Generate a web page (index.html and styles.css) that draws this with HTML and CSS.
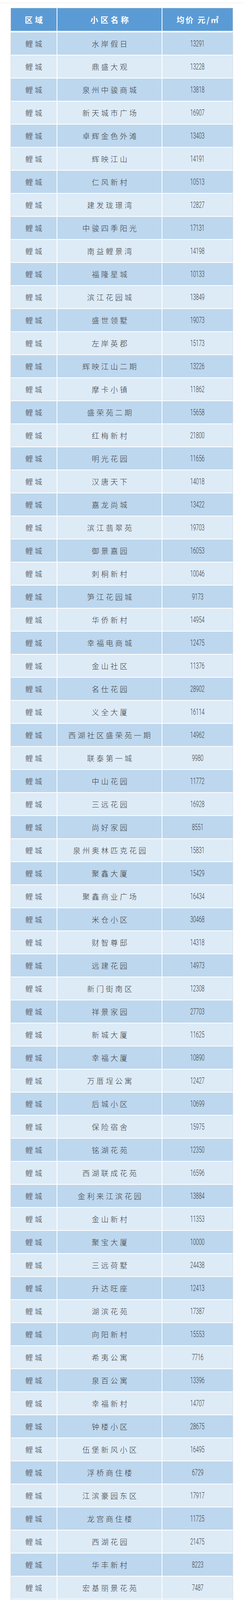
FILE: index.html
```html
<!DOCTYPE html>
<html lang="zh">
<head>
<meta charset="utf-8">
<title>鲤城小区均价</title>
<link rel="stylesheet" href="styles.css">
</head>
<body>
<div class="topline"></div>
<div class="tbl">
  <div class="tr hdr"><div class="c1">区域</div><div class="c2">小区名称</div><div class="c3">均价 元/㎡</div></div>
  <div class="tr"><div class="c1">鲤城</div><div class="c2">水岸假日</div><div class="c3"><span class="n">13291</span></div></div>
  <div class="tr"><div class="c1">鲤城</div><div class="c2">鼎盛大观</div><div class="c3"><span class="n">13228</span></div></div>
  <div class="tr"><div class="c1">鲤城</div><div class="c2">泉州中骏商城</div><div class="c3"><span class="n">13818</span></div></div>
  <div class="tr"><div class="c1">鲤城</div><div class="c2">新天城市广场</div><div class="c3"><span class="n">16907</span></div></div>
  <div class="tr"><div class="c1">鲤城</div><div class="c2">卓辉金色外滩</div><div class="c3"><span class="n">13403</span></div></div>
  <div class="tr"><div class="c1">鲤城</div><div class="c2">辉映江山</div><div class="c3"><span class="n">14191</span></div></div>
  <div class="tr"><div class="c1">鲤城</div><div class="c2">仁风新村</div><div class="c3"><span class="n">10513</span></div></div>
  <div class="tr"><div class="c1">鲤城</div><div class="c2">建发珑璟湾</div><div class="c3"><span class="n">12827</span></div></div>
  <div class="tr"><div class="c1">鲤城</div><div class="c2">中骏四季阳光</div><div class="c3"><span class="n">17131</span></div></div>
  <div class="tr"><div class="c1">鲤城</div><div class="c2">南益鲤景湾</div><div class="c3"><span class="n">14198</span></div></div>
  <div class="tr"><div class="c1">鲤城</div><div class="c2">福隆星城</div><div class="c3"><span class="n">10133</span></div></div>
  <div class="tr"><div class="c1">鲤城</div><div class="c2">滨江花园城</div><div class="c3"><span class="n">13849</span></div></div>
  <div class="tr"><div class="c1">鲤城</div><div class="c2">盛世领墅</div><div class="c3"><span class="n">19073</span></div></div>
  <div class="tr"><div class="c1">鲤城</div><div class="c2">左岸英郡</div><div class="c3"><span class="n">15173</span></div></div>
  <div class="tr"><div class="c1">鲤城</div><div class="c2">辉映江山二期</div><div class="c3"><span class="n">13226</span></div></div>
  <div class="tr"><div class="c1">鲤城</div><div class="c2">摩卡小镇</div><div class="c3"><span class="n">11862</span></div></div>
  <div class="tr"><div class="c1">鲤城</div><div class="c2">盛荣苑二期</div><div class="c3"><span class="n">15658</span></div></div>
  <div class="tr"><div class="c1">鲤城</div><div class="c2">红梅新村</div><div class="c3"><span class="n">21800</span></div></div>
  <div class="tr"><div class="c1">鲤城</div><div class="c2">明光花园</div><div class="c3"><span class="n">11656</span></div></div>
  <div class="tr"><div class="c1">鲤城</div><div class="c2">汉唐天下</div><div class="c3"><span class="n">14018</span></div></div>
  <div class="tr"><div class="c1">鲤城</div><div class="c2">嘉龙尚城</div><div class="c3"><span class="n">13422</span></div></div>
  <div class="tr"><div class="c1">鲤城</div><div class="c2">滨江翡翠苑</div><div class="c3"><span class="n">19703</span></div></div>
  <div class="tr"><div class="c1">鲤城</div><div class="c2">御景嘉园</div><div class="c3"><span class="n">16053</span></div></div>
  <div class="tr"><div class="c1">鲤城</div><div class="c2">刺桐新村</div><div class="c3"><span class="n">10046</span></div></div>
  <div class="tr"><div class="c1">鲤城</div><div class="c2">笋江花园城</div><div class="c3"><span class="n">9173</span></div></div>
  <div class="tr"><div class="c1">鲤城</div><div class="c2">华侨新村</div><div class="c3"><span class="n">14954</span></div></div>
  <div class="tr"><div class="c1">鲤城</div><div class="c2">幸福电商城</div><div class="c3"><span class="n">12475</span></div></div>
  <div class="tr"><div class="c1">鲤城</div><div class="c2">金山社区</div><div class="c3"><span class="n">11376</span></div></div>
  <div class="tr"><div class="c1">鲤城</div><div class="c2">名仕花园</div><div class="c3"><span class="n">28902</span></div></div>
  <div class="tr"><div class="c1">鲤城</div><div class="c2">义全大厦</div><div class="c3"><span class="n">16114</span></div></div>
  <div class="tr"><div class="c1">鲤城</div><div class="c2">西湖社区盛荣苑一期</div><div class="c3"><span class="n">14962</span></div></div>
  <div class="tr"><div class="c1">鲤城</div><div class="c2">联泰第一城</div><div class="c3"><span class="n">9980</span></div></div>
  <div class="tr"><div class="c1">鲤城</div><div class="c2">中山花园</div><div class="c3"><span class="n">11772</span></div></div>
  <div class="tr"><div class="c1">鲤城</div><div class="c2">三远花园</div><div class="c3"><span class="n">16928</span></div></div>
  <div class="tr"><div class="c1">鲤城</div><div class="c2">尚好家园</div><div class="c3"><span class="n">8551</span></div></div>
  <div class="tr"><div class="c1">鲤城</div><div class="c2">泉州奥林匹克花园</div><div class="c3"><span class="n">15831</span></div></div>
  <div class="tr"><div class="c1">鲤城</div><div class="c2">聚鑫大厦</div><div class="c3"><span class="n">15429</span></div></div>
  <div class="tr"><div class="c1">鲤城</div><div class="c2">聚鑫商业广场</div><div class="c3"><span class="n">16434</span></div></div>
  <div class="tr"><div class="c1">鲤城</div><div class="c2">米仓小区</div><div class="c3"><span class="n">30468</span></div></div>
  <div class="tr"><div class="c1">鲤城</div><div class="c2">财智尊邸</div><div class="c3"><span class="n">14318</span></div></div>
  <div class="tr"><div class="c1">鲤城</div><div class="c2">远建花园</div><div class="c3"><span class="n">14973</span></div></div>
  <div class="tr"><div class="c1">鲤城</div><div class="c2">新门街南区</div><div class="c3"><span class="n">12308</span></div></div>
  <div class="tr"><div class="c1">鲤城</div><div class="c2">祥景家园</div><div class="c3"><span class="n">27703</span></div></div>
  <div class="tr"><div class="c1">鲤城</div><div class="c2">新城大厦</div><div class="c3"><span class="n">11625</span></div></div>
  <div class="tr"><div class="c1">鲤城</div><div class="c2">幸福大厦</div><div class="c3"><span class="n">10890</span></div></div>
  <div class="tr"><div class="c1">鲤城</div><div class="c2">万厝埕公寓</div><div class="c3"><span class="n">12427</span></div></div>
  <div class="tr"><div class="c1">鲤城</div><div class="c2">后城小区</div><div class="c3"><span class="n">10699</span></div></div>
  <div class="tr"><div class="c1">鲤城</div><div class="c2">保险宿舍</div><div class="c3"><span class="n">15975</span></div></div>
  <div class="tr"><div class="c1">鲤城</div><div class="c2">铭湖花苑</div><div class="c3"><span class="n">12350</span></div></div>
  <div class="tr"><div class="c1">鲤城</div><div class="c2">西湖联成花苑</div><div class="c3"><span class="n">16596</span></div></div>
  <div class="tr"><div class="c1">鲤城</div><div class="c2">金利来江滨花园</div><div class="c3"><span class="n">13884</span></div></div>
  <div class="tr"><div class="c1">鲤城</div><div class="c2">金山新村</div><div class="c3"><span class="n">11353</span></div></div>
  <div class="tr"><div class="c1">鲤城</div><div class="c2">聚宝大厦</div><div class="c3"><span class="n">10000</span></div></div>
  <div class="tr"><div class="c1">鲤城</div><div class="c2">三远荷墅</div><div class="c3"><span class="n">24438</span></div></div>
  <div class="tr"><div class="c1">鲤城</div><div class="c2">升达旺座</div><div class="c3"><span class="n">12413</span></div></div>
  <div class="tr"><div class="c1">鲤城</div><div class="c2">湖滨花苑</div><div class="c3"><span class="n">17387</span></div></div>
  <div class="tr"><div class="c1">鲤城</div><div class="c2">向阳新村</div><div class="c3"><span class="n">15553</span></div></div>
  <div class="tr"><div class="c1">鲤城</div><div class="c2">希夷公寓</div><div class="c3"><span class="n">7716</span></div></div>
  <div class="tr"><div class="c1">鲤城</div><div class="c2">泉百公寓</div><div class="c3"><span class="n">13396</span></div></div>
  <div class="tr"><div class="c1">鲤城</div><div class="c2">幸福新村</div><div class="c3"><span class="n">14707</span></div></div>
  <div class="tr"><div class="c1">鲤城</div><div class="c2">钟楼小区</div><div class="c3"><span class="n">28675</span></div></div>
  <div class="tr"><div class="c1">鲤城</div><div class="c2">伍堡新风小区</div><div class="c3"><span class="n">16495</span></div></div>
  <div class="tr"><div class="c1">鲤城</div><div class="c2">浮桥商住楼</div><div class="c3"><span class="n">6729</span></div></div>
  <div class="tr"><div class="c1">鲤城</div><div class="c2">江滨豪园东区</div><div class="c3"><span class="n">17917</span></div></div>
  <div class="tr"><div class="c1">鲤城</div><div class="c2">龙宫商住楼</div><div class="c3"><span class="n">11725</span></div></div>
  <div class="tr"><div class="c1">鲤城</div><div class="c2">西湖花园</div><div class="c3"><span class="n">21475</span></div></div>
  <div class="tr"><div class="c1">鲤城</div><div class="c2">华丰新村</div><div class="c3"><span class="n">8223</span></div></div>
  <div class="tr"><div class="c1">鲤城</div><div class="c2">宏基丽景花苑</div><div class="c3"><span class="n">7487</span></div></div>
  <div class="tr"><div class="c1">鲤城</div><div class="c2">清源普明社区</div><div class="c3"><span class="n">11828</span></div></div>
  <div class="tr"><div class="c1">鲤城</div><div class="c2">福邸西湖</div><div class="c3"><span class="n">12408</span></div></div>
  <div class="tr"><div class="c1">鲤城</div><div class="c2">朝阳阁</div><div class="c3"><span class="n">13289</span></div></div>
  <div class="tr"><div class="c1">鲤城</div><div class="c2">西隅公寓</div><div class="c3"><span class="n">13190</span></div></div>
  <div class="tr"><div class="c1">鲤城</div><div class="c2">东街10号区</div><div class="c3"><span class="n">24084</span></div></div>
  <div class="tr"><div class="c1">鲤城</div><div class="c2">东街3号区</div><div class="c3"><span class="n">16490</span></div></div>
  <div class="tr"><div class="c1">鲤城</div><div class="c2">公安宿舍</div><div class="c3"><span class="n">12566</span></div></div>
  <div class="tr"><div class="c1">鲤城</div><div class="c2">义宝大厦</div><div class="c3"><span class="n">14295</span></div></div>
  <div class="tr"><div class="c1">鲤城</div><div class="c2">市物资局宿舍</div><div class="c3"><span class="n">12886</span></div></div>
  <div class="tr"><div class="c1">鲤城</div><div class="c2">联城花苑</div><div class="c3"><span class="n">16380</span></div></div>
  <div class="tr"><div class="c1">鲤城</div><div class="c2">工商宿舍</div><div class="c3"><span class="n">12771</span></div></div>
  <div class="tr"><div class="c1">鲤城</div><div class="c2">广益新村</div><div class="c3"><span class="n">8828</span></div></div>
  <div class="tr"><div class="c1">鲤城</div><div class="c2">东街8号区</div><div class="c3"><span class="n">23808</span></div></div>
  <div class="tr"><div class="c1">鲤城</div><div class="c2">北峰镇公寓</div><div class="c3"><span class="n">9612</span></div></div>
  <div class="tr"><div class="c1">鲤城</div><div class="c2">幸福公寓</div><div class="c3"><span class="n">13769</span></div></div>
  <div class="tr"><div class="c1">鲤城</div><div class="c2">东街5号区</div><div class="c3"><span class="n">12521</span></div></div>
  <div class="tr"><div class="c1">鲤城</div><div class="c2">东升社区</div><div class="c3"><span class="n">21555</span></div></div>
  <div class="tr"><div class="c1">鲤城</div><div class="c2">小希夷商业宿舍</div><div class="c3"><span class="n">11039</span></div></div>
  <div class="tr"><div class="c1">鲤城</div><div class="c2">东街11号区</div><div class="c3"><span class="n">23936</span></div></div>
  <div class="tr"><div class="c1">鲤城</div><div class="c2">平水庙邮电公寓</div><div class="c3"><span class="n">13098</span></div></div>
  <div class="tr"><div class="c1">鲤城</div><div class="c2">崇德楼</div><div class="c3"><span class="n">10558</span></div></div>
  <div class="tr"><div class="c1">鲤城</div><div class="c2">五建宿舍</div><div class="c3"><span class="n">10600</span></div></div>
  <div class="tr"><div class="c1">鲤城</div><div class="c2">东煌广场</div><div class="c3"><span class="n">11470</span></div></div>
  <div class="tr"><div class="c1">鲤城</div><div class="c2">打锡街商住楼</div><div class="c3"><span class="n">14166</span></div></div>
  <div class="tr"><div class="c1">鲤城</div><div class="c2">百源新村</div><div class="c3"><span class="n">16264</span></div></div>
  <div class="tr"><div class="c1">鲤城</div><div class="c2">新门街北区</div><div class="c3"><span class="n">12505</span></div></div>
  <div class="tr"><div class="c1">鲤城</div><div class="c2">小山新村</div><div class="c3"><span class="n">12349</span></div></div>
  <div class="tr"><div class="c1">鲤城</div><div class="c2">聚融大厦</div><div class="c3"><span class="n">19333</span></div></div>
  <div class="tr"><div class="c1">鲤城</div><div class="c2">金利来花苑</div><div class="c3"><span class="n">16537</span></div></div>
  <div class="tr"><div class="c1">鲤城</div><div class="c2">江滨豪园西区</div><div class="c3"><span class="n">18035</span></div></div>
  <div class="tr"><div class="c1">鲤城</div><div class="c2">金池公寓</div><div class="c3"><span class="n">23774</span></div></div>
  <div class="tr"><div class="c1">鲤城</div><div class="c2">建福新村</div><div class="c3"><span class="n">9901</span></div></div>
  <div class="tr"><div class="c1">鲤城</div><div class="c2">综合开发公寓</div><div class="c3"><span class="n">21974</span></div></div>
  <div class="tr"><div class="c1">鲤城</div><div class="c2">东街4号区</div><div class="c3"><span class="n">13364</span></div></div>
  <div class="tr"><div class="c1">鲤城</div><div class="c2">机床厂宿舍</div><div class="c3"><span class="n">24253</span></div></div>
  <div class="tr"><div class="c1">鲤城</div><div class="c2">学府街南3区</div><div class="c3"><span class="n">11924</span></div></div>
  <div class="tr"><div class="c1">鲤城</div><div class="c2">崇福路师院宿舍</div><div class="c3"><span class="n">22783</span></div></div>
  <div class="tr"><div class="c1">鲤城</div><div class="c2">伍堡祥和苑</div><div class="c3"><span class="n">13387</span></div></div>
  <div class="tr"><div class="c1">鲤城</div><div class="c2">江南春天</div><div class="c3"><span class="n">8717</span></div></div>
  <div class="tr"><div class="c1">鲤城</div><div class="c2">第一轻机厂宿舍</div><div class="c3"><span class="n">12666</span></div></div>
</div>
</body>
</html>
```

FILE: styles.css
```css
html, body {
  margin: 0;
  padding: 0;
  background: #ffffff;
}
body {
  font-family: "Noto Sans CJK SC", "Noto Sans", sans-serif;
  color: #3a3a3a;
}
.topline {
  height: 1px;
  margin-top: 7px;
  background: #ececec;
}
.tbl {
  margin: 12px 0 0 27px;
  width: 568px;
  border: 1px solid #dadada;
  background: #ffffff;
  display: flex;
  flex-direction: column;
  gap: 2px;
}
.tr {
  display: grid;
  grid-template-columns: 117px 267px 180px;
  column-gap: 2px;
  height: 57px;
}
.tr > div {
  display: flex;
  align-items: center;
  justify-content: center;
  font-size: 19px;
  font-weight: 300;
  letter-spacing: 5px;
  padding-left: 5px;
  white-space: nowrap;
}
.tr:nth-child(even) > div {
  background: #bdd7ee;
}
.tr:nth-child(odd) > div {
  background: #ddebf7;
}
.tr.hdr {
  height: 58px;
  margin-bottom: 2px;
}
.tr.hdr > div {
  background: #5b9bd5;
  color: #ffffff;
  font-weight: 700;
  font-size: 20px;
  letter-spacing: 6px;
  padding-left: 6px;
}
.tr > .c3 {
  letter-spacing: 0;
  padding-left: 0;
}
.tr.hdr > .c3 {
  letter-spacing: 3px;
  padding-left: 3px;
}
.n {
  display: inline-block;
  font-family: Roboto, "Liberation Sans", sans-serif;
  font-weight: 300;
  font-size: 22px;
  letter-spacing: 0;
  color: #3a3a3a;
  transform: scaleX(0.6);
}
```
